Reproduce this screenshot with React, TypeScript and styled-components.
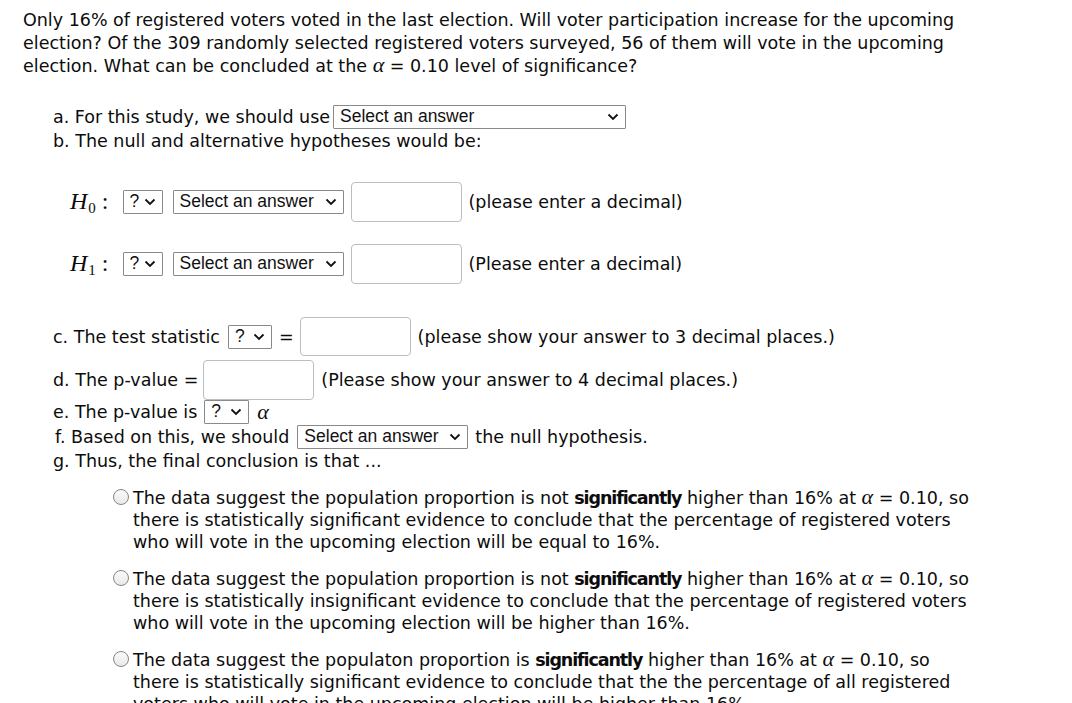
import React from "react";
import styled, { createGlobalStyle } from "styled-components";

const Global = createGlobalStyle`
  html, body { margin: 0; padding: 0; background: #fff; }
  body { font-family: "DejaVu Sans", Verdana, sans-serif; font-size: 17.5px; color: #0c0c0c; }
`;

const Page = styled.div`
  padding: 9px 0 0 23px;
  width: 1049px;
`;

const Para = styled.p`
  margin: 0;
  line-height: 22.5px;
`;

const Row = styled.div<{ $h: number; $mt: number; $pl: number }>`
  display: flex;
  align-items: center;
  height: ${(p) => p.$h}px;
  margin-top: ${(p) => p.$mt}px;
  padding-left: ${(p) => p.$pl}px;
  white-space: nowrap;
`;

const Gap = styled.span<{ $w: number }>`
  display: inline-block;
  width: ${(p) => p.$w}px;
  flex: none;
`;

const SelectBox = styled.span<{ $w: number }>`
  display: inline-flex;
  align-items: center;
  justify-content: space-between;
  box-sizing: border-box;
  width: ${(p) => p.$w}px;
  height: 24px;
  padding: 0 6px 0 6px;
  border: 1px solid #8a8a8a;
  border-radius: 1px;
  background: #fff;
  font-family: "Liberation Sans", Arial, sans-serif;
  font-size: 17.5px;
  color: #111;
  flex: none;
`;

const InputBox = styled.span<{ $h?: number }>`
  display: inline-block;
  box-sizing: border-box;
  width: 111px;
  height: ${(p) => p.$h ?? 40}px;
  border: 1px solid #bdbdbd;
  border-radius: 4px;
  background: #fff;
  flex: none;
`;

const Math = styled.span`
  font-family: "Liberation Serif", "DejaVu Serif", serif;
  font-size: 24px;
  display: inline-flex;
  align-items: baseline;
`;

const MathI = styled.i`
  font-style: italic;
`;

const Sub = styled.span`
  font-size: 15px;
  position: relative;
  top: 4px;
  margin-left: 1px;
`;

const Colon = styled.span`
  margin-left: 6px;
`;

const Alpha = styled.span`
  font-family: "Liberation Serif", "DejaVu Serif", serif;
  font-style: italic;
  font-size: 22px;
  line-height: 1;
`;

const Strong = styled.b`
  font-weight: 700;
  letter-spacing: -1.1px;
`;

const Options = styled.div`
  margin-top: 13px;
  padding-left: 90px;
`;

const Option = styled.div<{ $mt: number }>`
  display: flex;
  align-items: flex-start;
  margin-top: ${(p) => p.$mt}px;
  line-height: 22px;
`;

const Radio = styled.span`
  flex: none;
  box-sizing: border-box;
  width: 16px;
  height: 16px;
  margin-top: 3px;
  margin-right: 4px;
  border-radius: 50%;
  border: 1px solid #858585;
  background: linear-gradient(#fafafa, #e9e9e9);
`;

const Chevron = () => (
  <svg width="12" height="8" viewBox="0 0 12 8" aria-hidden>
    <path d="M1.5 1.5 L6 6 L10.5 1.5" fill="none" stroke="#111" strokeWidth="1.8" />
  </svg>
);

const Select = ({ w, label }: { w: number; label: string }) => (
  <SelectBox $w={w}>
    <span>{label}</span>
    <Chevron />
  </SelectBox>
);

const A = () => <Alpha>α</Alpha>;

export default function App() {
  return (
    <>
      <Global />
      <Page>
        <Para>
          Only 16% of registered voters voted in the last election. Will voter participation increase for the upcoming
          <br />
          election? Of the 309 randomly selected registered voters surveyed, 56 of them will vote in the upcoming
          <br />
          election. What can be concluded at the <A /> = 0.10 level of significance?
        </Para>

        <Row $h={24} $mt={27} $pl={30}>
          a. For this study, we should use<Gap $w={3} />
          <Select w={293} label="Select an answer" />
        </Row>
        <Row $h={24} $mt={0} $pl={30}>
          b. The null and alternative hypotheses would be:
        </Row>

        <Row $h={40} $mt={29} $pl={47}>
          <Math>
            <MathI>H</MathI>
            <Sub>0</Sub>
            <Colon>:</Colon>
          </Math>
          <Gap $w={14} />
          <Select w={40} label="?" />
          <Gap $w={10} />
          <Select w={171} label="Select an answer" />
          <Gap $w={7} />
          <InputBox />
          <Gap $w={7} />
          (please enter a decimal)
        </Row>
        <Row $h={40} $mt={22} $pl={47}>
          <Math>
            <MathI>H</MathI>
            <Sub>1</Sub>
            <Colon>:</Colon>
          </Math>
          <Gap $w={14} />
          <Select w={40} label="?" />
          <Gap $w={10} />
          <Select w={171} label="Select an answer" />
          <Gap $w={7} />
          <InputBox />
          <Gap $w={7} />
          (Please enter a decimal)
        </Row>

        <Row $h={40} $mt={33} $pl={30}>
          c. The test statistic<Gap $w={8} />
          <Select w={44} label="?" />
          <Gap $w={7} />=<Gap $w={6} />
          <InputBox $h={39} />
          <Gap $w={7} />
          (please show your answer to 3 decimal places.)
        </Row>
        <Row $h={40} $mt={3} $pl={30}>
          d. The p-value =<Gap $w={5} />
          <InputBox />
          <Gap $w={7} />
          (Please show your answer to 4 decimal places.)
        </Row>
        <Row $h={24} $mt={0} $pl={30}>
          e. The p-value is<Gap $w={7} />
          <Select w={45} label="?" />
          <Gap $w={8} />
          <A />
        </Row>
        <Row $h={24} $mt={1} $pl={32}>
          f. Based on this, we should<Gap $w={8} />
          <Select w={171} label="Select an answer" />
          <Gap $w={7} />
          the null hypothesis.
        </Row>
        <Row $h={24} $mt={0} $pl={30}>
          g. Thus, the final conclusion is that ...
        </Row>

        <Options>
          <Option $mt={0}>
            <Radio />
            <span>
              The data suggest the population proportion is not <Strong>significantly</Strong> higher than 16% at <A /> = 0.10, so
              <br />
              there is statistically significant evidence to conclude that the percentage of registered voters
              <br />
              who will vote in the upcoming election will be equal to 16%.
            </span>
          </Option>
          <Option $mt={14}>
            <Radio />
            <span>
              The data suggest the population proportion is not <Strong>significantly</Strong> higher than 16% at <A /> = 0.10, so
              <br />
              there is statistically insignificant evidence to conclude that the percentage of registered voters
              <br />
              who will vote in the upcoming election will be higher than 16%.
            </span>
          </Option>
          <Option $mt={14}>
            <Radio />
            <span>
              The data suggest the populaton proportion is <Strong>significantly</Strong> higher than 16% at <A /> = 0.10, so
              <br />
              there is statistically significant evidence to conclude that the the percentage of all registered
              <br />
              voters who will vote in the upcoming election will be higher than 16%.
            </span>
          </Option>
        </Options>
      </Page>
    </>
  );
}
